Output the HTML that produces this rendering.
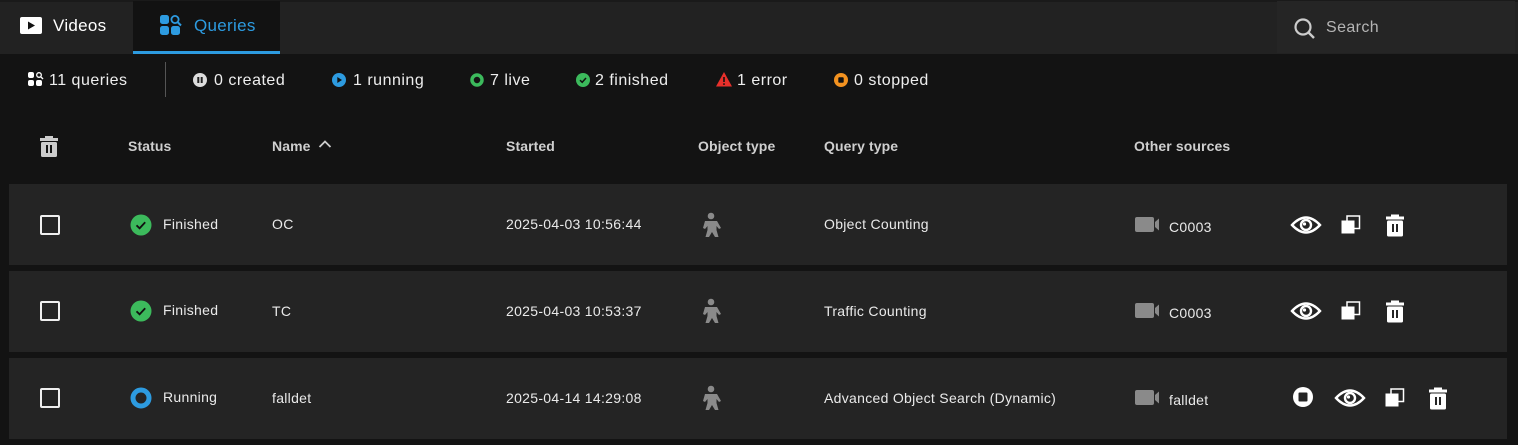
<!DOCTYPE html>
<html><head><meta charset="utf-8"><style>
*{margin:0;padding:0;box-sizing:border-box}
body{width:1518px;height:445px;background:#131313;font-family:"Liberation Sans",sans-serif;color:#e8e8e8;position:relative;overflow:hidden}
.abs{position:absolute}
.t{position:absolute;white-space:nowrap}
.row{position:absolute;left:9px;width:1498px;height:81px;background:#242424}
.cb{position:absolute;left:31px;width:20px;height:20px;border:2px solid #eee;border-radius:2px}
.cell{position:absolute;font-size:14px;color:#eaeaea;white-space:nowrap;letter-spacing:0.3px}
.hd{position:absolute;top:138px;font-size:14px;font-weight:bold;color:#cfcfcf;letter-spacing:0.1px}
.st{position:absolute;top:72px;font-size:16px;color:#eee;white-space:nowrap;letter-spacing:0.5px}
</style></head><body>
<div class="abs" style="left:0;top:0;width:1518px;height:54px;background:#222;border-top:2px solid #1a1a1a"></div>
<div class="abs" style="left:133px;top:1px;width:147px;height:53px;background:#121212;border-bottom:3px solid #2d9be0"></div>
<div class="abs" style="left:1277px;top:1px;width:238px;height:52px;background:#252525"></div>
<svg class="abs" style="left:20px;top:17px" width="22" height="18"><rect width="22" height="17" rx="2" fill="#fff"/><path d="M8 4.5 L15 8.5 L8 12.5Z" fill="#111"/></svg>
<div class="t" style="left:53px;top:16px;font-size:17px;color:#fff;letter-spacing:0.3px">Videos</div>
<svg class="abs" style="left:160px;top:15px" width="24" height="24" fill="#2d9be0"><rect x="0" y="0" width="9" height="9" rx="2.5"/><rect x="0" y="11" width="9" height="9" rx="2.5"/><rect x="11" y="11" width="9" height="9" rx="2.5"/><circle cx="15" cy="4.5" r="3.6" fill="none" stroke="#2d9be0" stroke-width="1.8"/><path d="M17.5 7 L21 10.5" stroke="#2d9be0" stroke-width="2"/></svg>
<div class="t" style="left:194px;top:16px;font-size:17px;color:#2d9be0;letter-spacing:0.3px">Queries</div>
<svg class="abs" style="left:1293px;top:17px" width="24" height="24"><circle cx="10" cy="10" r="7.5" fill="none" stroke="#ccc" stroke-width="2.2"/><path d="M15.5 15.5 L21 21" stroke="#ccc" stroke-width="2.4"/></svg>
<div class="t" style="left:1326px;top:19px;font-size:16px;color:#b5b5b5;letter-spacing:0.4px">Search</div>

<svg class="abs" style="left:28px;top:72px" width="16" height="16" fill="#fff"><rect x="0" y="0" width="6" height="6" rx="2"/><rect x="0" y="8" width="6" height="6" rx="2"/><rect x="8" y="8" width="6" height="6" rx="2"/><circle cx="11" cy="3" r="2.3" fill="none" stroke="#fff" stroke-width="1.3"/><path d="M12.6 4.6 L15 7" stroke="#fff" stroke-width="1.4"/></svg>
<div class="st" style="left:49px">11 queries</div>
<div class="abs" style="left:165px;top:62px;width:1px;height:35px;background:#555"></div>
<svg class="abs" style="left:193px;top:73px" width="14" height="14"><circle cx="7" cy="7" r="7" fill="#ddd"/><rect x="4.3" y="4" width="2" height="6" fill="#222"/><rect x="7.7" y="4" width="2" height="6" fill="#222"/></svg>
<div class="st" style="left:214px">0 created</div>
<svg class="abs" style="left:332px;top:73px" width="14" height="14"><circle cx="7" cy="7" r="7" fill="#2d9be0"/><path d="M5.3 4 L10 7 L5.3 10Z" fill="#111"/></svg>
<div class="st" style="left:353px">1 running</div>
<svg class="abs" style="left:470px;top:73px" width="14" height="14"><circle cx="7" cy="7" r="5" fill="none" stroke="#3cba5c" stroke-width="3.5"/></svg>
<div class="st" style="left:490px">7 live</div>
<svg class="abs" style="left:576px;top:73px" width="14" height="14"><circle cx="7" cy="7" r="7" fill="#3cba5c"/><path d="M4 7.2 L6.2 9.3 L10 5" stroke="#111" stroke-width="1.5" fill="none"/></svg>
<div class="st" style="left:595px">2 finished</div>
<svg class="abs" style="left:716px;top:72px" width="16" height="15"><path d="M8 0 L16 14.5 L0 14.5Z" fill="#e8302b"/><rect x="7.2" y="5" width="1.6" height="5" fill="#111"/><rect x="7.2" y="11.3" width="1.6" height="1.6" fill="#111"/></svg>
<div class="st" style="left:737px">1 error</div>
<svg class="abs" style="left:834px;top:73px" width="14" height="14"><circle cx="7" cy="7" r="7" fill="#f39220"/><rect x="4.3" y="4.3" width="5.4" height="5.4" rx="1" fill="#111"/></svg>
<div class="st" style="left:854px">0 stopped</div>

<svg class="abs" style="left:39px;top:134px" width="20" height="23"><path d="M6 2 h8 v2 h5 v3 h-18 v-3 h5z" fill="#ccc"/><rect x="2" y="8" width="16" height="15" rx="1.5" fill="#ccc"/><rect x="7" y="11" width="2" height="8" fill="#131313"/><rect x="11" y="11" width="2" height="8" fill="#131313"/></svg>
<div class="hd" style="left:128px">Status</div>
<div class="hd" style="left:272px">Name</div>
<svg class="abs" style="left:318px;top:139px" width="14" height="10"><path d="M1.5 8 L7 2.5 L12.5 8" stroke="#ccc" stroke-width="1.8" fill="none"/></svg>
<div class="hd" style="left:506px">Started</div>
<div class="hd" style="left:698px">Object type</div>
<div class="hd" style="left:824px">Query type</div>
<div class="hd" style="left:1134px">Other sources</div>

<div class="row" style="top:184px"></div>
<div class="row" style="top:271px"></div>
<div class="row" style="top:358px"></div>

<div class="cb" style="top:215px;left:40px"></div>
<div class="cb" style="top:301px;left:40px"></div>
<div class="cb" style="top:388px;left:40px"></div>

<svg class="abs" style="left:130px;top:214px" width="22" height="22"><circle cx="11" cy="11" r="10.5" fill="#3cba5c"/><path d="M6.5 11.3 L9.6 14.3 L15.2 8.3" stroke="#111" stroke-width="1.8" fill="none"/></svg>
<div class="cell" style="left:163px;top:216px">Finished</div>
<svg class="abs" style="left:130px;top:300px" width="22" height="22"><circle cx="11" cy="11" r="10.5" fill="#3cba5c"/><path d="M6.5 11.3 L9.6 14.3 L15.2 8.3" stroke="#111" stroke-width="1.8" fill="none"/></svg>
<div class="cell" style="left:163px;top:302px">Finished</div>
<svg class="abs" style="left:130px;top:387px" width="22" height="22"><circle cx="11" cy="11" r="8" fill="none" stroke="#2d9be0" stroke-width="5"/></svg>
<div class="cell" style="left:163px;top:389px">Running</div>

<div class="cell" style="left:272px;top:216px">OC</div>
<div class="cell" style="left:272px;top:303px">TC</div>
<div class="cell" style="left:272px;top:390px">falldet</div>
<div class="cell" style="left:506px;top:216px">2025-04-03 10:56:44</div>
<div class="cell" style="left:506px;top:303px">2025-04-03 10:53:37</div>
<div class="cell" style="left:506px;top:390px">2025-04-14 14:29:08</div>

<svg class="abs" style="left:700px;top:212px" width="22" height="26" fill="#8a8a8a"><circle cx="11" cy="4" r="3.3"/><path d="M5 9 h12 l4 7 l-2 1 l-2.5 -3 v4 l2 7 h-3.5 l-3 -5 l-3 5 h-3.5 l2 -7 v-4 l-2.5 3 l-2 -1z"/></svg>
<svg class="abs" style="left:700px;top:298px" width="22" height="26" fill="#8a8a8a"><circle cx="11" cy="4" r="3.3"/><path d="M5 9 h12 l4 7 l-2 1 l-2.5 -3 v4 l2 7 h-3.5 l-3 -5 l-3 5 h-3.5 l2 -7 v-4 l-2.5 3 l-2 -1z"/></svg>
<svg class="abs" style="left:700px;top:385px" width="22" height="26" fill="#8a8a8a"><circle cx="11" cy="4" r="3.3"/><path d="M5 9 h12 l4 7 l-2 1 l-2.5 -3 v4 l2 7 h-3.5 l-3 -5 l-3 5 h-3.5 l2 -7 v-4 l-2.5 3 l-2 -1z"/></svg>

<div class="cell" style="left:824px;top:216px">Object Counting</div>
<div class="cell" style="left:824px;top:303px">Traffic Counting</div>
<div class="cell" style="left:824px;top:390px">Advanced Object Search (Dynamic)</div>

<svg class="abs" style="left:1135px;top:217px" width="26" height="16" fill="#8a8a8a"><rect x="0" y="0" width="19" height="15" rx="2"/><path d="M20 5 L24 1.5 V13.5 L20 10Z"/></svg>
<div class="cell" style="left:1169px;top:219px">C0003</div>
<svg class="abs" style="left:1135px;top:303px" width="26" height="16" fill="#8a8a8a"><rect x="0" y="0" width="19" height="15" rx="2"/><path d="M20 5 L24 1.5 V13.5 L20 10Z"/></svg>
<div class="cell" style="left:1169px;top:305px">C0003</div>
<svg class="abs" style="left:1135px;top:390px" width="26" height="16" fill="#8a8a8a"><rect x="0" y="0" width="19" height="15" rx="2"/><path d="M20 5 L24 1.5 V13.5 L20 10Z"/></svg>
<div class="cell" style="left:1169px;top:392px">falldet</div>

<svg class="abs" style="left:1290px;top:213px" width="32" height="24"><path d="M2 12 Q16 -3 30 12 Q16 27 2 12Z" fill="none" stroke="#fff" stroke-width="2.4"/><circle cx="16" cy="12" r="5" fill="none" stroke="#fff" stroke-width="2.4"/><circle cx="14.5" cy="11" r="1.6" fill="#fff"/></svg>
<svg class="abs" style="left:1341px;top:215px" width="20" height="20"><rect x="6" y="1" width="12.5" height="12.5" fill="none" stroke="#fff" stroke-width="1.5"/><rect x="0.5" y="5.5" width="13" height="13" fill="#fff"/></svg>
<svg class="abs" style="left:1385px;top:214px" width="20" height="23"><path d="M6 0.5 h8 v2 h5 v3 h-18 v-3 h5z" fill="#fff"/><rect x="2" y="6.5" width="16" height="16" rx="1.5" fill="#fff"/><rect x="7" y="10" width="2" height="8" fill="#242424"/><rect x="11" y="10" width="2" height="8" fill="#242424"/></svg>

<svg class="abs" style="left:1290px;top:299px" width="32" height="24"><path d="M2 12 Q16 -3 30 12 Q16 27 2 12Z" fill="none" stroke="#fff" stroke-width="2.4"/><circle cx="16" cy="12" r="5" fill="none" stroke="#fff" stroke-width="2.4"/><circle cx="14.5" cy="11" r="1.6" fill="#fff"/></svg>
<svg class="abs" style="left:1341px;top:301px" width="20" height="20"><rect x="6" y="1" width="12.5" height="12.5" fill="none" stroke="#fff" stroke-width="1.5"/><rect x="0.5" y="5.5" width="13" height="13" fill="#fff"/></svg>
<svg class="abs" style="left:1385px;top:300px" width="20" height="23"><path d="M6 0.5 h8 v2 h5 v3 h-18 v-3 h5z" fill="#fff"/><rect x="2" y="6.5" width="16" height="16" rx="1.5" fill="#fff"/><rect x="7" y="10" width="2" height="8" fill="#242424"/><rect x="11" y="10" width="2" height="8" fill="#242424"/></svg>

<svg class="abs" style="left:1293px;top:387px" width="21" height="21"><circle cx="10" cy="10" r="10" fill="#fff"/><rect x="5.5" y="5.5" width="9" height="9" rx="1" fill="#242424"/></svg>
<svg class="abs" style="left:1334px;top:386px" width="32" height="24"><path d="M2 12 Q16 -3 30 12 Q16 27 2 12Z" fill="none" stroke="#fff" stroke-width="2.4"/><circle cx="16" cy="12" r="5" fill="none" stroke="#fff" stroke-width="2.4"/><circle cx="14.5" cy="11" r="1.6" fill="#fff"/></svg>
<svg class="abs" style="left:1385px;top:388px" width="20" height="20"><rect x="6" y="1" width="12.5" height="12.5" fill="none" stroke="#fff" stroke-width="1.5"/><rect x="0.5" y="5.5" width="13" height="13" fill="#fff"/></svg>
<svg class="abs" style="left:1428px;top:387px" width="20" height="23"><path d="M6 0.5 h8 v2 h5 v3 h-18 v-3 h5z" fill="#fff"/><rect x="2" y="6.5" width="16" height="16" rx="1.5" fill="#fff"/><rect x="7" y="10" width="2" height="8" fill="#242424"/><rect x="11" y="10" width="2" height="8" fill="#242424"/></svg>
</body></html>
